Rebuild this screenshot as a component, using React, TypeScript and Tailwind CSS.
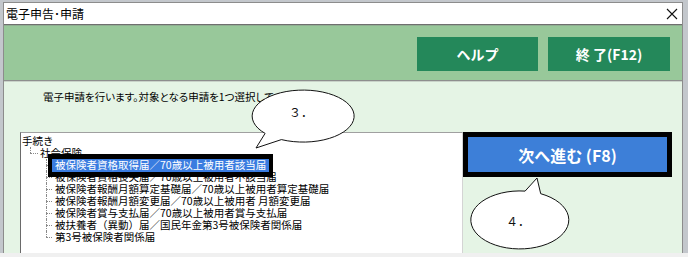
import React from "react";

const items = [
  "被保険者資格喪失届／70歳以上被用者不該当届",
  "被保険者報酬月額算定基礎届／70歳以上被用者算定基礎届",
  "被保険者報酬月額変更届／70歳以上被用者 月額変更届",
  "被保険者賞与支払届／70歳以上被用者賞与支払届",
  "被扶養者（異動）届／国民年金第3号被保険者関係届",
  "第3号被保険者関係届",
];

function Connector({ last }: { last?: boolean }) {
  return (
    <div className="relative h-full w-[6px] shrink-0">
      {last ? (
        <div className="absolute left-0 top-0 h-1/2 border-l border-dotted border-[#8a8a8a]" />
      ) : (
        <div className="absolute left-0 top-0 h-full border-l border-dotted border-[#8a8a8a]" />
      )}
      <div className="absolute left-0 right-0 top-1/2 border-t border-dotted border-[#8a8a8a]" />
    </div>
  );
}

export default function App() {
  return (
    <div className="relative flex h-[257px] w-[688px] flex-col overflow-hidden bg-[#c3c7cc] font-['Noto_Sans_CJK_JP',sans-serif] text-black">
      <div className="h-[2px] shrink-0" />
      <div className="ml-[3px] flex h-[251px] w-[680px] shrink-0 flex-col border-x border-t border-[#8c8c8c]">
        {/* title bar */}
        <div className="flex h-[21px] shrink-0 items-center justify-between bg-white pl-[2px] pr-[3px]">
          <span className="text-[12px] leading-none">電子申告･申請</span>
          <svg width="12" height="12" viewBox="0 0 12 12" className="mr-[1px]">
            <path d="M1 1 L11 11 M11 1 L1 11" stroke="#111" strokeWidth="1.1" />
          </svg>
        </div>
        <div className="h-[1px] shrink-0 bg-[#6f6f6f]" />
        <div className="h-[1px] shrink-0 bg-[#8faf91]" />
        {/* green band */}
        <div className="flex h-[54px] shrink-0 items-start justify-end gap-[10px] bg-[#98c89a] pr-[12px] pt-[11px]">
          <div className="flex h-[34px] w-[121px] items-center justify-center bg-[#24885a] text-[14px] font-bold text-white">
            ヘルプ
          </div>
          <div className="flex h-[34px] w-[122px] items-center justify-center bg-[#24885a] text-[14px] font-bold text-white">
            終 了(F12)
          </div>
        </div>
        <div className="h-[1px] shrink-0 bg-[#8e8e8e]" />
        <div className="h-[1px] shrink-0 bg-[#c9d3c9]" />
        {/* content */}
        <div className="flex flex-1 flex-col bg-[#e5f4e5]">
          <div className="pl-[39px] pt-[8px] text-[10.5px] leading-[14px] [font-feature-settings:'palt']">
            電子申請を行います。対象となる申請を1つ選択してください。
          </div>
          <div className="mt-[28px] flex flex-1 pl-[16px]">
            <div className="w-[443px] border-l border-t border-r border-l-[#6a6a6a] border-t-[#a0a0a0] border-r-[#d4d4d4] bg-white pt-[2px] text-[10.5px]">
              <div className="flex h-[12px] items-center pl-[1px] leading-[12px]">手続き</div>
              <div className="flex h-[12px] items-center leading-[12px]">
                <div className="w-[9px] shrink-0" />
                <div className="relative h-full w-[8px] shrink-0">
                  <div className="absolute left-0 top-0 h-1/2 border-l border-dotted border-[#8a8a8a]" />
                  <div className="absolute left-0 right-0 top-1/2 border-t border-dotted border-[#8a8a8a]" />
                </div>
                <span className="pl-[2px]">社会保険</span>
              </div>
              <div className="flex h-[12px] items-center leading-[12px]">
                <div className="w-[25px] shrink-0" />
                <Connector />
                <span className="relative flex h-[13px] items-center bg-[#3a7ce0] px-[3px] text-white">
                  被保険者資格取得届／70歳以上被用者該当届
                  <span className="absolute -bottom-[5px] -left-[4px] -right-[4px] -top-[5px] border-x-4 border-y-[5px] border-black" />
                </span>
              </div>
              {items.map((t, i) => (
                <div key={i} className="flex h-[12px] items-center leading-[12px]">
                  <div className="w-[25px] shrink-0" />
                  <Connector last={i === items.length - 1} />
                  <span className="pl-[3px]">{t}</span>
                </div>
              ))}
            </div>
            <div className="relative z-10 h-[45px] w-[209px] border-[5px] border-black">
              <div className="flex h-full w-full items-center justify-center bg-[#3d7fd8] text-[16px] font-bold text-white">
                次へ進む (F8)
              </div>
            </div>
          </div>
        </div>
      </div>
      <div className="h-[4px] shrink-0 bg-[#f0f0f0]" />

      {/* callouts */}
      <svg className="pointer-events-none absolute left-0 top-0 z-20" width="688" height="257">
        <path
          d="M 281.4 139.6 A 51 26 0 1 0 265.1 133.4 L 256 148 Z"
          fill="#fff"
          stroke="#111"
          strokeWidth="1"
        />
        <text x="289" y="117" fontSize="12" fontFamily="'Noto Sans CJK JP', sans-serif" fill="#111">
          ３．
        </text>
        <path
          d="M 525.1 191.1 A 49 29 0 1 0 540.7 193.7 L 537 178 Z"
          fill="#fff"
          stroke="#111"
          strokeWidth="1"
        />
        <text x="506" y="226" fontSize="12" fontFamily="'Noto Sans CJK JP', sans-serif" fill="#111">
          ４．
        </text>
      </svg>
    </div>
  );
}
